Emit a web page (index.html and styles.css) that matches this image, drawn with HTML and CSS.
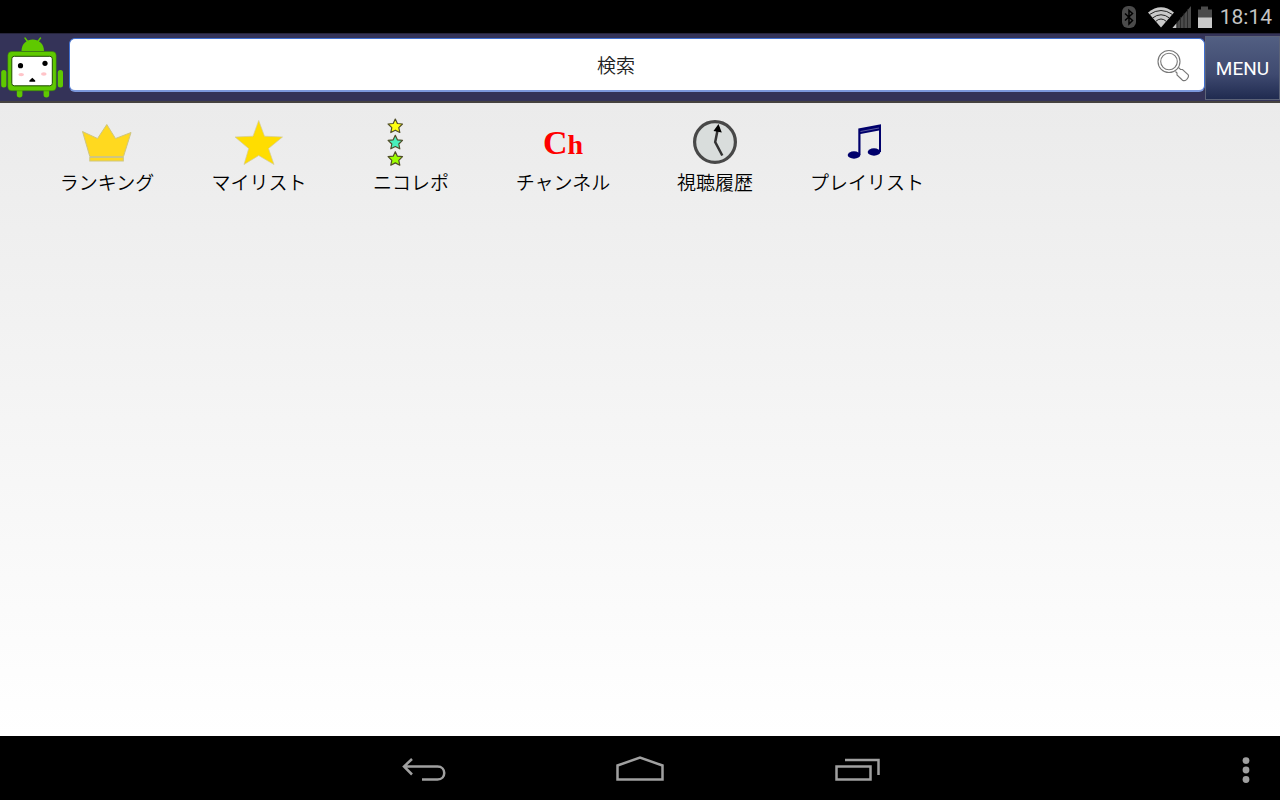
FILE: index.html
```html
<!DOCTYPE html>
<html lang="ja">
<head>
<meta charset="utf-8">
<meta name="viewport" content="width=device-width, initial-scale=1">
<title>ホーム</title>
<link rel="stylesheet" href="styles.css">
</head>
<body>
<div class="status-bar">
  <svg width="92" height="32" viewBox="1120 0 92 32" aria-hidden="true">
    <rect x="1121" y="5" width="14" height="22" rx="6" fill="#4b4b4b"/>
    <path d="M1124 12.500L1131.500 19.500L1128 23V9.500L1131.500 12.500L1124 19.500" fill="none" stroke="#000" stroke-width="1.500"/>
    <path d="M1147 11.500Q1160 1 1173 11.500L1160 26.500Z" fill="#c9c9c9"/>
    <path d="M1148.500 13.500Q1160 5.500 1171.500 13.500M1151.500 17Q1160 10.500 1168.500 17M1154.500 20.500Q1160 15.500 1165.500 20.500" fill="none" stroke="#222" stroke-width="1"/>
    <path d="M1171.500 27L1190 5V27Z" fill="#4b4b4b"/>
    <path d="M1171.500 27L1175.500 22.200V27Z" fill="#c9c9c9"/>
    <path d="M1176 20V27M1179.500 16V27M1183 12V27M1186.500 8V27" stroke="#222" stroke-width=".8"/>
    <path d="M1197 8.500H1200V5.500H1207V8.500H1211V17H1197Z" fill="#4b4b4b"/>
    <rect x="1197" y="16.500" width="14" height="10.500" fill="#c9c9c9"/>
  </svg>
  <time class="clock">18:14</time>
</div>

<header class="app-bar">
  <svg class="logo" width="66" height="66" viewBox="0 34 66 66" role="img" aria-label="ロゴ">
    <g fill="#5fc900">
      <path d="M25 38L28 42M40.500 38L37.500 42" stroke="#5fc900" stroke-width="1.500" stroke-linecap="round"/>
      <path d="M21.500 51C21.500 35.500 44 35.500 44 51Z"/>
      <rect x="1.200" y="70" width="5.200" height="17.500" rx="2.500"/>
      <rect x="57.800" y="70" width="5.200" height="17.500" rx="2.500"/>
      <rect x="16.800" y="86" width="5.600" height="11.500" rx="2.700"/>
      <rect x="43.600" y="86" width="5.600" height="11.500" rx="2.700"/>
      <rect x="7.800" y="51.500" width="48.400" height="39.300" rx="4" stroke="#367e00" stroke-width=".5"/>
    </g>
    <rect x="11.800" y="56.300" width="40.500" height="29.500" rx="2.500" fill="#fff" stroke="#1f4a00" stroke-width="1"/>
    <circle cx="20.500" cy="65.700" r="2.600"/>
    <circle cx="45" cy="63.300" r="2.600"/>
    <ellipse cx="21.200" cy="74.600" rx="2.800" ry="1.700" fill="#ffc4c8"/>
    <ellipse cx="43.800" cy="74" rx="2.800" ry="1.700" fill="#ffc4c8"/>
    <path d="M32.300 77.800L35.200 80.500V81.800H29.400V80.500Z"/>
  </svg>
  <form class="search">
    <input class="search-input" type="text" placeholder="検索" aria-label="検索">
    <button class="search-button" type="button" aria-label="検索する">
      <svg width="34" height="34" viewBox="1156 48 34 34" fill="none" stroke="#777" stroke-width="1.100" aria-hidden="true">
        <circle cx="1169" cy="61.500" r="11"/>
        <circle cx="1169" cy="61.500" r="8.300"/>
        <path d="M1175.500 71.500L1177 73V75L1182.500 80.200Q1184.500 81.500 1186.800 79.300Q1189.500 76.500 1188 74.700L1182.500 69.500H1180.500L1178.500 67.500"/>
      </svg>
    </button>
  </form>
  <button class="menu-button" type="button">MENU</button>
</header>

<main class="home">
  <nav class="shortcuts" aria-label="メニュー">
    <a class="shortcut" href="#ranking">
      <svg width="56" height="48" viewBox="79 118 56 48" fill="#ffd91f" stroke="#cfc680" stroke-width="1" aria-hidden="true">
        <path d="M82.500 131.500L97.500 138.500L106.800 124.500L115.500 138.500L131 132.500L123.500 156.500H89.800Z"/>
        <rect x="89.800" y="157.500" width="33.500" height="3.500"/>
      </svg>
      <span>ランキング</span>
    </a>
    <a class="shortcut" href="#mylist">
      <svg width="56" height="48" viewBox="231 118 56 48" fill="#fd0" stroke="#d2cc9a" stroke-width=".7" stroke-linejoin="round" aria-hidden="true">
        <path d="M258.700 120.500L264.500 136.200L282.500 137L268.500 148.500L274 164.500L258.700 155.500L244 164.500L248.700 148.500L235 137L253 136.200Z"/>
      </svg>
      <span>マイリスト</span>
    </a>
    <a class="shortcut" href="#nicorepo">
      <svg width="56" height="48" viewBox="383 118 56 48" stroke="#504d28" stroke-width="1.200" stroke-linejoin="round" aria-hidden="true">
        <defs><path id="small-star" d="M0-7L2.100-2.500L7.200-2L3.500 1.700L4.500 6.500L0 4.200L-4.500 6.500L-3.500 1.700L-7.200-2L-2.100-2.500Z"/></defs>
        <use href="#small-star" x="395.300" y="126" fill="#ff1"/>
        <use href="#small-star" x="395.300" y="142.300" fill="#48efbb"/>
        <use href="#small-star" x="395.300" y="158.700" fill="#9cff00"/>
      </svg>
      <span>ニコレポ</span>
    </a>
    <a class="shortcut" href="#channel">
      <span class="channel-mark" aria-hidden="true">C<span class="channel-small">h</span></span>
      <span>チャンネル</span>
    </a>
    <a class="shortcut" href="#history">
      <svg width="56" height="48" viewBox="687 118 56 48" aria-hidden="true">
        <circle cx="715" cy="142" r="20.400" fill="#d9dddc" stroke="#484848" stroke-width="3.200"/>
        <path d="M718.200 127L715.200 142L722.300 155.500" fill="none" stroke="#333" stroke-width="2.500"/>
        <path d="M718.500 124L721.800 132.500L713.500 131Z"/>
      </svg>
      <span>視聴履歴</span>
    </a>
    <a class="shortcut" href="#playlist">
      <svg width="56" height="48" viewBox="839 118 56 48" fill="#00006c" aria-hidden="true">
        <ellipse cx="854" cy="155" rx="6.300" ry="3.700"/>
        <ellipse cx="874" cy="152" rx="6.300" ry="3.700"/>
        <path d="M858.300 128.500L881 124.200V152H879V130.500L860.500 134V155H858.300Z"/>
        <path d="M860.500 131.500L879 128" stroke="#8585b5" stroke-width=".7"/>
      </svg>
      <span>プレイリスト</span>
    </a>
  </nav>
</main>

<footer class="nav-bar">
  <div class="nav-keys">
    <button class="nav-key" type="button" aria-label="戻る">
      <svg width="50" height="34" viewBox="398 753 50 34"><path d="M412 759L404 766.500L412 774.500M404 766.500H437.500C446.500 766.500 446.500 779.500 437.500 779.500H422"/></svg>
    </button>
    <button class="nav-key" type="button" aria-label="ホーム">
      <svg width="50" height="34" viewBox="615 753 50 34"><path d="M617.500 765.500L640 757.500L662.500 765.500V779.500H617.500Z"/></svg>
    </button>
    <button class="nav-key" type="button" aria-label="履歴">
      <svg width="50" height="34" viewBox="832 753 50 34"><path d="M836.500 766.500H870.500V779.500H836.500ZM845 760H878.500V775"/></svg>
    </button>
  </div>
  <button class="more-key" type="button" aria-label="その他">
    <svg width="12" height="30" viewBox="1240 755 12 30" fill="#a0a0a0"><circle cx="1246" cy="760.600" r="3.400"/><circle cx="1246" cy="770" r="3.400"/><circle cx="1246" cy="779.500" r="3.400"/></svg>
  </button>
</footer>
</body>
</html>
```
FILE: styles.css
```css
* {
  box-sizing: border-box;
}

body {
  margin: 0;
  min-height: 100vh;
  display: flex;
  flex-direction: column;
  background: #000;
  font-family: Roboto, "Noto Sans CJK JP", sans-serif;
  font-size: 19px;
  line-height: 24px;
}

button,
input {
  font: inherit;
  padding: 0;
  border: 0;
  background: none;
}

svg {
  display: block;
}

.status-bar {
  display: flex;
  justify-content: flex-end;
  align-items: center;
  gap: 7px;
  height: 33px;
  padding-right: 8px;
}

.clock {
  padding-top: 1px;
  color: #c4c4c4;
  font-size: 21px;
}

.app-bar {
  display: flex;
  align-items: center;
  height: 70px;
  background: #343358;
  border-top: 1px solid #26253c;
  border-bottom: 2px solid #45423f;
}

.logo {
  flex: none;
  margin-right: 3px;
  margin-bottom: 2px;
}

.search {
  flex: 1;
  display: flex;
  align-items: center;
  height: 54px;
  margin-bottom: 5px;
  padding-right: 14px;
  background: #fff;
  border: 1px solid #3f6fd0;
  border-bottom: 2px solid #7c98dc;
  border-radius: 6px;
}

.search-input {
  flex: 1;
  min-width: 0;
  height: 100%;
  padding-top: 3px;
  padding-left: 6px;
  text-align: center;
  color: #222;
}

.search-input::placeholder {
  color: #222;
  font-weight: 350;
  opacity: 1;
}

.menu-button {
  width: 75px;
  height: 64px;
  padding-top: 2px;
  color: #fff;
  background: linear-gradient(#525f82, #3f4a70 60%, #202b50);
  border: 1px solid #5c6378;
}

.home {
  flex: 1;
  padding: 15px 33px 15px 31px;
  background: linear-gradient(#ebebeb, #fff);
}

.shortcuts {
  display: grid;
  grid-template-columns: repeat(8, 1fr);
}

.shortcut {
  display: flex;
  flex-direction: column;
  align-items: center;
  gap: 6px;
  color: #000;
  font-weight: 350;
  text-decoration: none;
  white-space: nowrap;
}

.channel-mark {
  height: 48px;
  color: #f00;
  font-family: "Liberation Serif", serif;
  font-size: 34px;
  font-weight: 700;
  line-height: 50px;
}

.channel-small {
  font-size: 28px;
}

.nav-bar {
  display: grid;
  grid-template-columns: 1fr auto 1fr;
  align-items: center;
  height: 64px;
  padding: 4px 28px 0;
}

.nav-keys {
  grid-column: 2;
  display: flex;
  gap: 167px;
}

.nav-key {
  fill: none;
  stroke: #a0a0a0;
  stroke-width: 2.500px;
}

.more-key {
  justify-self: end;
}
```
